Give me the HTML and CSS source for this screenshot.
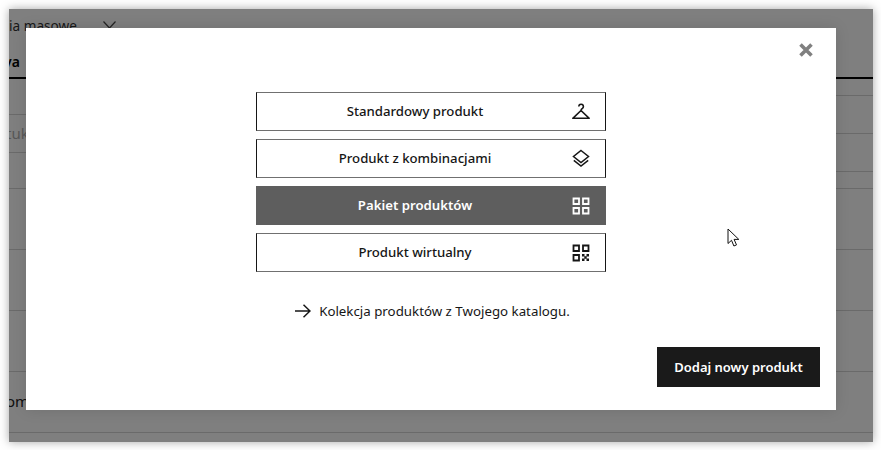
FILE: index.html
```html
<!DOCTYPE html>
<html lang="pl">
<head>
<meta charset="utf-8">
<title>Dodaj nowy produkt</title>
<link rel="stylesheet" href="styles.css">
</head>
<body>
<div class="window">
  <div class="page">
    <div class="top"><span class="top-label">ia masowe</span>
      <svg class="chev" width="13" height="8" viewBox="0 0 13 8"><path d="M.5.5l6 6.500 6-6.500" fill="none" stroke="#4a4a4a" stroke-width="1.2"/></svg>
    </div>
    <div class="tabs"><span class="tab">va</span></div>
    <div class="panes">
      <div class="pane-left">
        <div class="row l1"></div>
        <div class="row l2"><span class="muted">tuk</span></div>
        <div class="row l3"></div>
      </div>
      <div class="pane-right">
        <div class="row p1"></div>
        <div class="row p2"></div>
        <div class="row p3"></div>
        <div class="row p4"></div>
      </div>
    </div>
    <div class="row r5"></div>
    <div class="row r6"></div>
    <div class="row r7"></div>
    <div class="row r8"><span class="bottom-text">omi</span></div>
  </div>
  <div class="overlay"></div>
  <div class="modal">
    <div class="close">
      <svg width="16" height="16" viewBox="0 0 16 16"><path d="M2.500 2.500l11 11M13.500 2.500l-11 11" stroke="#808080" stroke-width="3.600" fill="none"/></svg>
    </div>
    <div class="options">
      <div class="opt"><span class="label">Standardowy produkt</span>
        <svg class="ico" width="20" height="20" viewBox="0 0 20 20" fill="none" stroke="#161616" stroke-width="1.600" stroke-linejoin="round"><path d="M7.800 4.500a2.300 2.300 0 1 1 3.500 2c-.9.500-1.300 1-1.300 2M10 8.500L1.800 16.300h16.400z"/></svg>
      </div>
      <div class="opt"><span class="label">Produkt z kombinacjami</span>
        <svg class="ico" width="20" height="20" viewBox="0 0 20 20" fill="none" stroke="#161616" stroke-width="1.500"><path d="M10 1.500l7.500 6-7.500 6-7.500-6zM2.800 11.300L10 17l7.200-5.700"/></svg>
      </div>
      <div class="opt active"><span class="label">Pakiet produktów</span>
        <svg class="ico" width="20" height="20" viewBox="0 0 20 20" fill="none" stroke="#fff" stroke-width="1.800"><path d="M2.500 2.500h5.500V8H2.500zM12 2.500h5.500V8H12zM2.500 12H8v5.500H2.500zM12 12h5.500v5.500H12z"/></svg>
      </div>
      <div class="opt"><span class="label">Produkt wirtualny</span>
        <svg class="ico" width="20" height="20" viewBox="0 0 20 20" fill="none" stroke="#161616" stroke-width="1.800"><path d="M2.500 2.500h5.500V8H2.500zM12 2.500h5.500V8H12zM2.500 12H8v5.500H2.500z"/><path d="M11 11h2.500v2.500H11zM15.500 11H18v2.500h-2.500zM13.300 13.300h2.400v2.400h-2.400zM11 15.500h2.500V18H11zM15.500 15.500H18V18h-2.500z" fill="#161616" stroke="none"/></svg>
      </div>
    </div>
    <div class="hint">
      <svg width="16" height="14" viewBox="0 0 16 14" fill="none" stroke="#161616" stroke-width="1.500"><path d="M0 7h15M8.500 .8L15 7l-6.500 6.200"/></svg>
      <span>Kolekcja produktów z Twojego katalogu.</span>
    </div>
    <div class="actions"><button class="add" type="button">Dodaj nowy produkt</button></div>
  </div>
  <svg class="cursor" width="14" height="20" viewBox="0 0 14 20"><path d="M1 1v14.500l3.500-3.200 2.400 5.700 2.600-1.100-2.400-5.500h4.700z" fill="#fff" stroke="#111" stroke-width="1"/></svg>
</div>
</body>
</html>
```
FILE: styles.css
```css
* { box-sizing: border-box; }
html, body { margin: 0; height: 100%; }
body {
  background: #fff;
  padding: 9px 8px 8px 9px;
  font-family: "Noto Sans", "Open Sans", sans-serif;
  color: #161616;
  overflow: hidden;
}
.window {
  position: relative;
  width: 864px;
  height: 433px;
  overflow: hidden;
  background: #fff;
}
body::before {
  content: "";
  position: absolute;
  left: 9px; top: 9px;
  width: 864px; height: 433px;
  box-shadow: 0 0 9px rgba(0,0,0,.35);
}
.page { display: flex; flex-direction: column; height: 100%; }
.top { height: 36px; padding-top: 8px; display: flex; align-items: flex-start; gap: 26px; font-size: 13.600px; color: #333; }
.top-label { line-height: 18px; }
.chev { margin-top: 4px; }
.tabs { height: 34px; border-bottom: 2px solid #000; padding-top: 8px; font-size: 14px; font-weight: 600; line-height: 18px; color: #000; }
.tab { display: block; margin-left: -5px; }
.panes { display: flex; height: 110px; }
.pane-left { width: 120px; }
.pane-right { flex: 1; }
.row { border-bottom: 1px solid #d4d4d4; font-size: 15px; line-height: 18px; }
.l1 { height: 36px; }
.l2 { height: 38px; padding-top: 9px; color: #b0b0b0; }
.muted { display: block; margin-left: -3px; }
.l3 { height: 36px; }
.p1 { height: 17px; }
.p2 { height: 38px; }
.p3 { height: 38px; }
.p4 { height: 17px; }
.r5 { height: 61px; }
.r6 { height: 61px; }
.r7 { height: 61px; }
.r8 { height: 61px; padding-top: 20px; color: #222; }
.bottom-text { display: block; margin-left: -3px; }
.overlay { position: absolute; inset: 0; background: rgba(0,0,0,.5); }
.modal {
  position: absolute;
  left: 17px; top: 19px;
  width: 810px; height: 382px;
  background: #fff;
  box-shadow: 0 0 14px rgba(0,0,0,.12);
  display: flex; flex-direction: column; align-items: center;
  padding-top: 64px;
}
.close { position: absolute; top: 14px; right: 22px; width: 16px; height: 16px; }
.close svg { display: block; }
.options { width: 350px; display: flex; flex-direction: column; gap: 8px; }
.opt {
  position: relative;
  height: 39px;
  border: 1px solid;
  border-color: #707070 #161616;
  padding: 0 32px 2px 0;
  display: flex; align-items: center; justify-content: center;
  font-size: 13.200px; font-weight: 500;
}
.opt.active { background: #5e5e5e; border-color: #5e5e5e; color: #fff; font-weight: 600; }
.ico { position: absolute; right: 14px; top: 9px; }
.hint { margin-top: 30px; padding-left: 3px; display: flex; align-items: center; gap: 8px; font-size: 13.300px; line-height: 18px; }
.actions { margin-top: auto; align-self: flex-end; padding: 0 16px 23px 0; }
.add {
  width: 163px; height: 40px;
  border: 0; background: #1a1a1a; color: #fff;
  font: 600 13px "Noto Sans", "Open Sans", sans-serif;
}
.cursor { position: absolute; left: 718px; top: 219px; }
```
